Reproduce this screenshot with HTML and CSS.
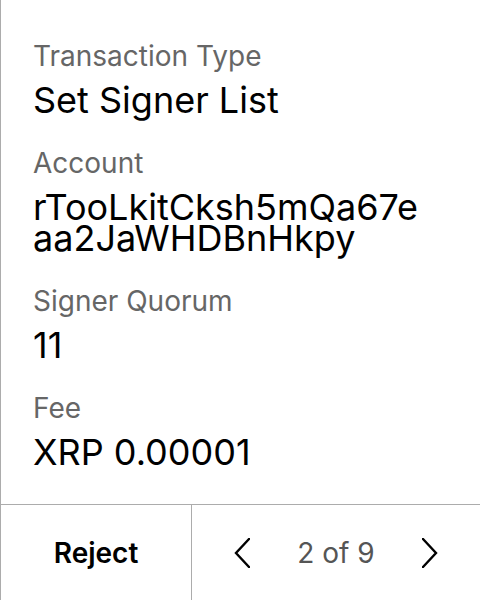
FILE: index.html
```html
<!DOCTYPE html>
<html>
<head>
<meta charset="utf-8">
<link rel="stylesheet" href="styles.css">
</head>
<body>
<div class="panel">
  <main class="details">
    <div class="field">
      <div class="label">Transaction Type</div>
      <div class="value">Set Signer List</div>
    </div>
    <div class="field">
      <div class="label">Account</div>
      <div class="value">rTooLkitCksh5mQa67eaa2JaWHDBnHkpy</div>
    </div>
    <div class="field">
      <div class="label">Signer Quorum</div>
      <div class="value">11</div>
    </div>
    <div class="field">
      <div class="label">Fee</div>
      <div class="value">XRP 0.00001</div>
    </div>
  </main>
  <footer class="footer">
    <button class="reject">Reject</button>
    <div class="pager">
      <svg class="chev" width="16" height="30" viewBox="0 0 16 30"><path d="M15 1 L2 15 L15 29" fill="none" stroke="#000" stroke-width="2.4" stroke-linecap="round" stroke-linejoin="miter"/></svg>
      <span class="count">2 of 9</span>
      <svg class="chev" width="16" height="30" viewBox="0 0 16 30"><path d="M1 1 L14 15 L1 29" fill="none" stroke="#000" stroke-width="2.4" stroke-linecap="round" stroke-linejoin="miter"/></svg>
    </div>
  </footer>
</div>
</body>
</html>
```
FILE: styles.css
```css
* { box-sizing: border-box; }
html, body { margin: 0; padding: 0; background: #fff; }
body { font-family: Inter, "Noto Sans", sans-serif; color: #000; }
.panel {
  width: 480px;
  height: 600px;
  border-left: 1px solid #acacac;
  display: flex;
  flex-direction: column;
}
.details {
  flex: 1;
  padding: 39px 48px 0 32px;
  display: flex;
  flex-direction: column;
  gap: 30px;
}
.field { display: flex; flex-direction: column; gap: 12px; }
.label { font-size: 28px; line-height: 34px; color: #666; }
.value { font-size: 36px; line-height: 31px; color: #000; word-break: break-all; }
.footer {
  height: 96px;
  border-top: 1px solid #acacac;
  display: flex;
}
.reject {
  width: 191px;
  border: 0;
  border-right: 1px solid #acacac;
  background: #fff;
  font-family: inherit;
  font-size: 28px;
  font-weight: 600;
  color: #000;
  padding: 0;
}
.pager {
  flex: 1;
  display: flex;
  align-items: center;
  justify-content: space-between;
  padding: 0 42px;
}
.count { font-size: 28px; color: #555; }
.chev { display: block; }
```
